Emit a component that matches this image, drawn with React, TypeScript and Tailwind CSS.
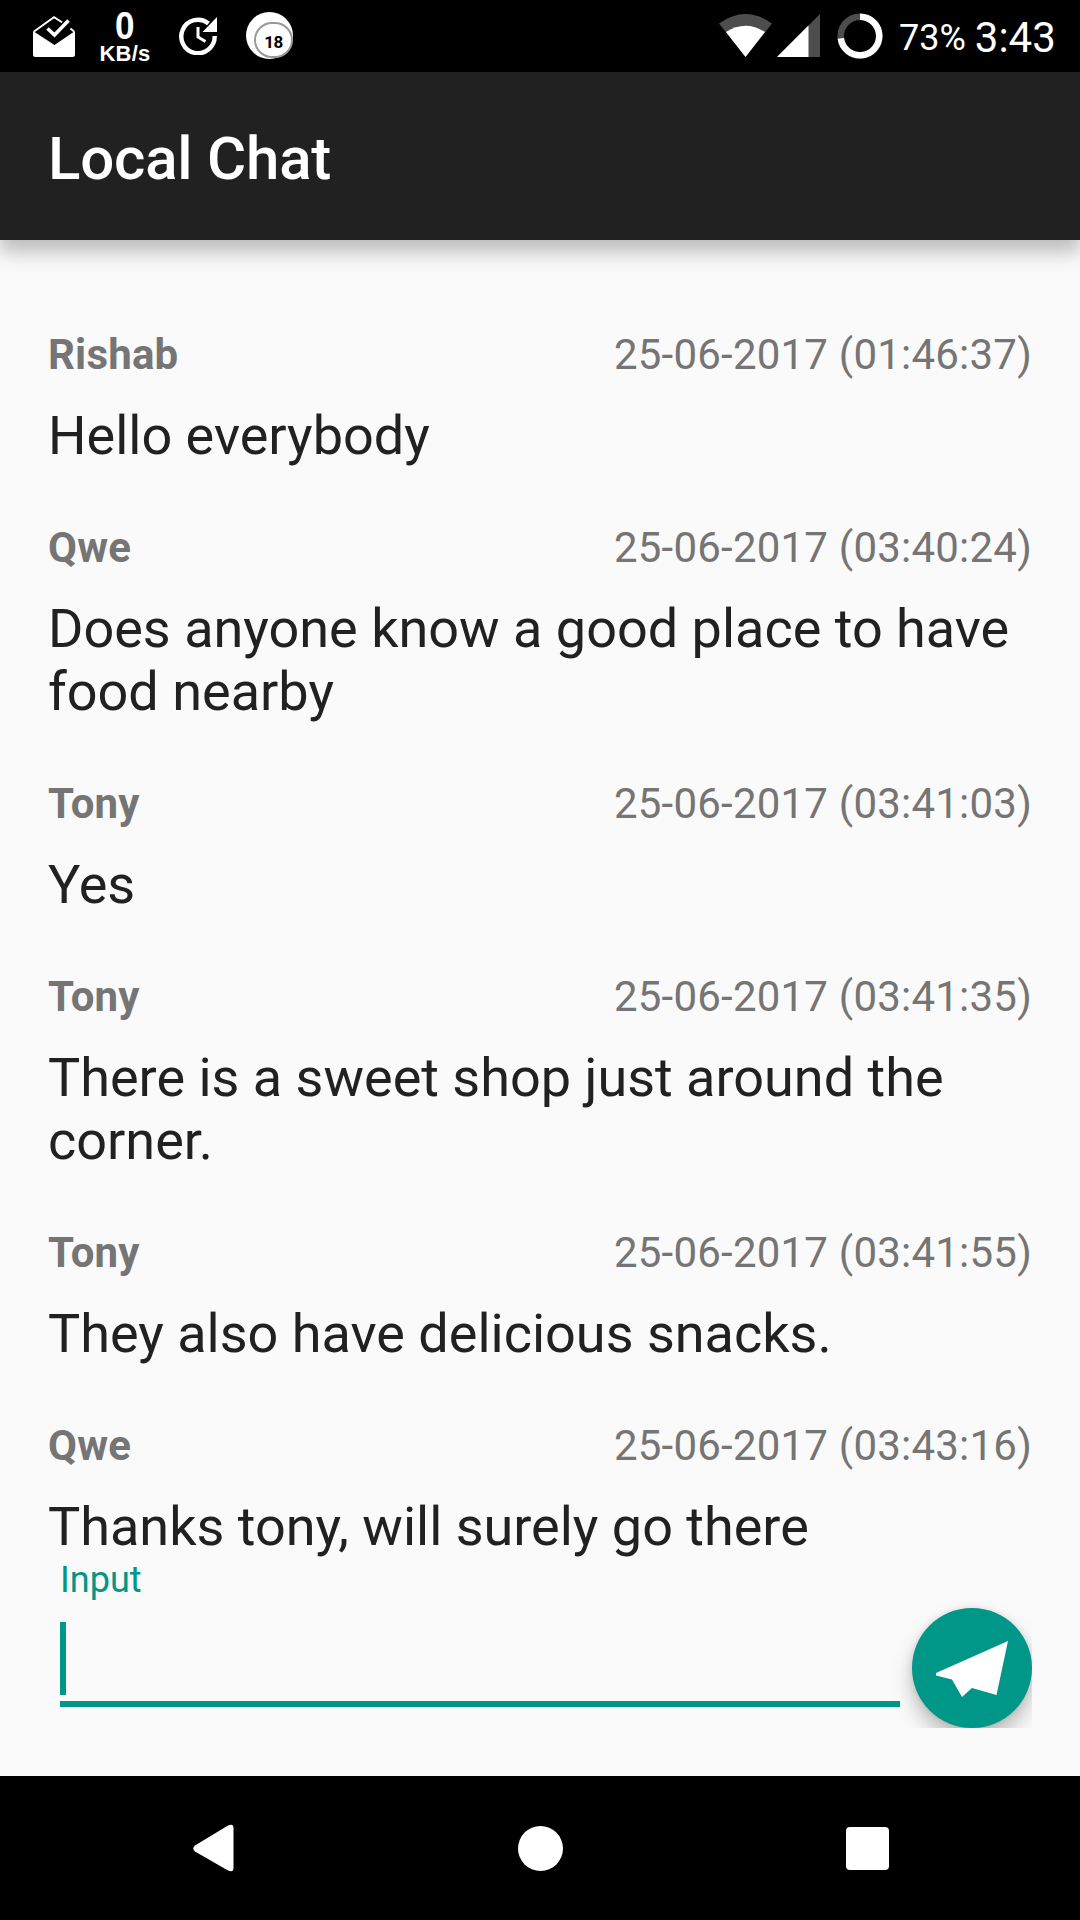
interface Message {
    name: string;
    time: string;
    text: string;
}

const messages: Message[] = [
    { name: "Rishab", time: "25-06-2017 (01:46:37)", text: "Hello everybody" },
    { name: "Qwe", time: "25-06-2017 (03:40:24)", text: "Does anyone know a good place to have food nearby" },
    { name: "Tony", time: "25-06-2017 (03:41:03)", text: "Yes" },
    { name: "Tony", time: "25-06-2017 (03:41:35)", text: "There is a sweet shop just around the corner." },
    { name: "Tony", time: "25-06-2017 (03:41:55)", text: "They also have delicious snacks." },
    { name: "Qwe", time: "25-06-2017 (03:43:16)", text: "Thanks tony, will surely go there" },
];

function StatusBar() {
    return (
        <div className="flex h-[72px] items-start bg-black pl-[33px] text-white">
            <svg className="mt-4 h-[42px] w-[42px]" viewBox="0 0 42 42">
                <path d="M0 15 V38.500 Q0 41 2.500 41 H39.500 Q42 41 42 38.500 V15 L21.500 29 Z" fill="#fff" />
                <path d="M1 15.500 L21 1.200 L29 6.200 M37.500 12.500 L41 15.500" fill="none" stroke="#fff" strokeWidth="1.8" />
                <path d="M14.500 12.500 L21.500 19 L35.500 4.500" fill="none" stroke="#fff" strokeWidth="3.600" />
            </svg>
            <div className="ml-[24px] flex w-[52px] flex-col items-center pt-[7px] font-['Liberation_Sans',sans-serif] font-bold">
                <span className="scale-x-90 text-[39px] leading-[37px]">0</span>
                <span className="text-[22px] leading-[20px] tracking-[0.2px]">KB/s</span>
            </div>
            <svg className="ml-[28px] mt-[17px] h-[38px] w-[39px]" viewBox="0 0 39 38">
                <path d="M29.500 6.500 A16.700 16.700 0 1 0 35.700 19" fill="none" stroke="#fff" strokeWidth="4.400" />
                <path d="M38 0 V15 H23.500 Z" fill="#fff" />
                <path d="M19 10 V20 L26.500 24.500" fill="none" stroke="#fff" strokeWidth="3" />
            </svg>
            <div className="ml-7 mt-3 flex h-[47px] w-[47px] items-end justify-end rounded-full bg-white">
                <div className="mb-[1px] flex h-[36px] w-[39px] items-center justify-center rounded-full border-2 border-[#999] text-[17px] font-bold leading-none tracking-[-0.5px] text-black">
                    <span className="pt-[4px]">18</span>
                </div>
            </div>
            <svg className="ml-[426px] mt-[14px] h-[43px] w-[53px]" viewBox="0 0 53 43">
                <path d="M0 9.500 Q26.500 -9.500 53 9.500 L26.500 43 Z" fill="#4d4d4d" />
                <path d="M7 18 Q26.500 5.500 46 18 L26.500 43 Z" fill="#fff" />
            </svg>
            <svg className="ml-[5px] mt-[14px] h-[43px] w-[43px]" viewBox="0 0 43 43">
                <path d="M43 0 V43 H0 Z" fill="#4d4d4d" />
                <path d="M31.500 11.500 V43 H0 Z" fill="#fff" />
            </svg>
            <svg className="ml-[17px] mt-[13px] h-[46px] w-[46px]" viewBox="0 0 46 46">
                <circle cx="23" cy="23" r="19.300" fill="none" stroke="#4d4d4d" strokeWidth="6.500" />
                <path d="M23 3.700 A19.300 19.300 0 1 1 3.800 25.400" fill="none" stroke="#fff" strokeWidth="6.500" />
            </svg>
            <span className="ml-[16px] mt-[17px] text-[36px] leading-[42px]">73%</span>
            <span className="ml-[9px] mt-[13px] text-[42px] leading-[49px]">3:43</span>
        </div>
    );
}

function MessageRow({ name, time, text }: Message) {
    return (
        <div className="text-[#212121]">
            <div className="flex justify-between text-[42px] leading-[49px] text-[#757575]">
                <span className="font-bold tracking-[0.2px]">{name}</span>
                <span className="tracking-[0.22px]">{time}</span>
            </div>
            <p className="mt-[25px] text-[54px] leading-[63px]">{text}</p>
        </div>
    );
}

function InputBar() {
    return (
        <div className="flex justify-between pl-[60px] pr-12">
            <div className="w-[840px]">
                <label className="block pt-[1px] text-[36px] leading-[42px] text-[#009688]">Input</label>
                <div className="mt-[21px] h-[85px] border-b-6 border-[#009688]">
                    <div className="h-[73px] w-[6px] bg-[#009688]" />
                </div>
            </div>
            {/* shadow is cut off by the button's parent on the right and bottom */}
            <div className="-ml-8 flex h-[170px] items-end overflow-hidden pl-8">
                <button className="flex h-[120px] w-[120px] items-center justify-center rounded-full bg-[#009688] shadow-[0_12px_20px_rgba(0,0,0,0.25),0_0_6px_rgba(0,0,0,0.1)]">
                    <svg className="h-[57px] w-[72px]" viewBox="0 0 72 57">
                        <path d="M72 1 L60.500 55 L36 48 L26 57 L16 39.500 L0 35.500 V33 Z" fill="#fff" />
                    </svg>
                </button>
            </div>
        </div>
    );
}

function NavBar() {
    return (
        <div className="flex h-36 items-center bg-black pl-[193px]">
            <svg className="h-[48px] w-[41px]" viewBox="0 0 41 48">
                <path d="M2 21.500 L35 1.500 Q40.500 -1 40.500 4 V44 Q40.500 49 35 46.500 L2 27.500 Q-1.500 24.500 2 21.500 Z" fill="#fff" />
            </svg>
            <div className="ml-[283.500px] h-[45px] w-[45px] rounded-full bg-white" />
            <div className="ml-[283.500px] h-[43px] w-[43px] rounded-[4px] bg-white" />
        </div>
    );
}

export default function App() {
    return (
        <div className="flex h-[1920px] w-[1080px] flex-col overflow-hidden bg-[#fafafa] font-[Roboto,sans-serif]">
            <StatusBar />
            <header className="flex h-[168px] items-center bg-[#212121] pl-12 pt-[6px] shadow-[0_12px_18px_rgba(0,0,0,0.25)]">
                <h1 className="text-[60px] font-medium leading-[70px] tracking-[-0.2px] text-white">Local Chat</h1>
            </header>
            <main className="flex h-[1318px] flex-col gap-[56px] px-12 pt-[90px]">
                {messages.map((message) => (
                    <MessageRow key={message.time} {...message} />
                ))}
            </main>
            <div className="h-[218px]">
                <InputBar />
            </div>
            <NavBar />
        </div>
    );
}
